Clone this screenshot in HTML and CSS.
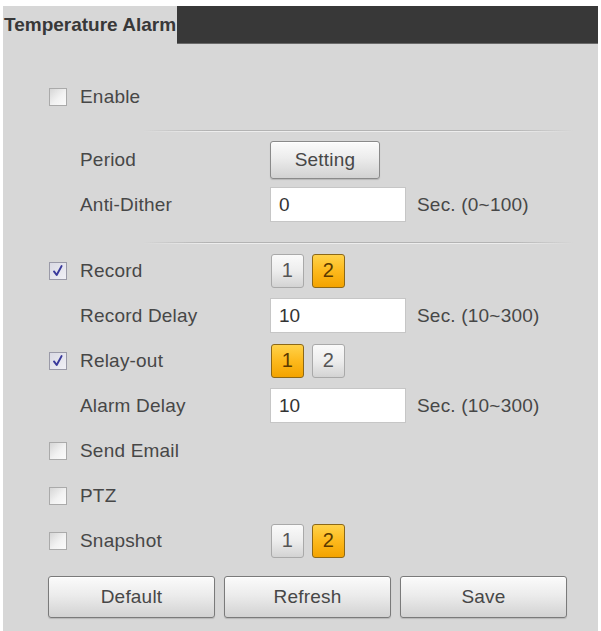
FILE: index.html
```html
<!DOCTYPE html>
<html>
<head>
<meta charset="utf-8">
<title>Temperature Alarm</title>
<link rel="stylesheet" href="styles.css">
</head>
<body>
<div class="panel">
  <div class="titlebar">
    <div class="title">Temperature Alarm</div>
    <div class="bar"></div>
  </div>
  <div class="form">
    <div class="row">
      <span class="cb"></span><span class="label">Enable</span>
    </div>
    <div class="sep sep1"></div>
    <div class="row">
      <span class="cell"></span><span class="label">Period</span>
      <button class="btn setting">Setting</button>
    </div>
    <div class="row">
      <span class="cell"></span><span class="label">Anti-Dither</span>
      <input class="field" type="text" value="0"><span class="unit">Sec. (0~100)</span>
    </div>
    <div class="sep sep2"></div>
    <div class="row">
      <span class="cb checked"><svg viewBox="0 0 18 18" width="16" height="16"><path d="M4.5 9.5 L7.5 13.5 L13 3.5" fill="none" stroke="#3a3a9c" stroke-width="2.2" stroke-linecap="round" stroke-linejoin="round"/></svg></span><span class="label">Record</span>
      <div class="nums"><span class="num">1</span><span class="num on">2</span></div>
    </div>
    <div class="row">
      <span class="cell"></span><span class="label">Record Delay</span>
      <input class="field" type="text" value="10"><span class="unit">Sec. (10~300)</span>
    </div>
    <div class="row">
      <span class="cb checked"><svg viewBox="0 0 18 18" width="16" height="16"><path d="M4.5 9.5 L7.5 13.5 L13 3.5" fill="none" stroke="#3a3a9c" stroke-width="2.2" stroke-linecap="round" stroke-linejoin="round"/></svg></span><span class="label">Relay-out</span>
      <div class="nums"><span class="num on">1</span><span class="num">2</span></div>
    </div>
    <div class="row">
      <span class="cell"></span><span class="label">Alarm Delay</span>
      <input class="field" type="text" value="10"><span class="unit">Sec. (10~300)</span>
    </div>
    <div class="row">
      <span class="cb"></span><span class="label">Send Email</span>
    </div>
    <div class="row">
      <span class="cb"></span><span class="label">PTZ</span>
    </div>
    <div class="row">
      <span class="cb"></span><span class="label">Snapshot</span>
      <div class="nums"><span class="num">1</span><span class="num on">2</span></div>
    </div>
    <div class="actions">
      <button class="btn action">Default</button>
      <button class="btn action">Refresh</button>
      <button class="btn action">Save</button>
    </div>
  </div>
</div>
</body>
</html>
```
FILE: styles.css
```css
* { box-sizing: border-box; }
html, body { margin: 0; padding: 0; background: #ffffff; }
body {
  width: 601px;
  height: 631px;
  overflow: hidden;
  font-family: "Liberation Sans", Arial, sans-serif;
  font-size: 19px;
  letter-spacing: 0.2px;
  color: #474747;
}
.panel {
  margin: 6px 3px 0 3px;
  height: 625px;
  background: #d7d7d7;
}
.titlebar {
  display: flex;
  height: 38px;
}
.title {
  width: 174px;
  display: flex;
  align-items: center;
  padding-left: 1px;
  font-size: 19px;
  letter-spacing: 0;
  font-weight: bold;
  color: #383838;
  white-space: nowrap;
  overflow: hidden;
}
.bar {
  flex: 1;
  background: #383838;
  border-bottom: 1px solid #6a6a6a;
}
.form {
  padding: 30px 0 0 46px;
}
.row {
  display: flex;
  align-items: center;
  height: 45px;
}
.cb {
  width: 18px;
  height: 18px;
  margin-right: 13px;
  border: 1px solid #aaaaaa;
  background: linear-gradient(135deg, #d6d6d6 0%, #f2f2f2 55%, #fbfbfb 100%);
  display: flex;
  align-items: center;
  justify-content: center;
}
.cb.checked {
  background: linear-gradient(135deg, #dadae4 0%, #f0f0f6 100%);
  border-color: #9a9aa8;
}
.cell { width: 31px; }
.label {
  width: 190px;
  white-space: nowrap;
}
.sep {
  height: 2px;
  margin-left: 94px;
  width: 430px;
  background:
    linear-gradient(to right, rgba(180,180,180,0) 0%, #b3b3b3 15%, #b3b3b3 85%, rgba(180,180,180,0) 100%) top / 100% 1px no-repeat,
    linear-gradient(to right, rgba(240,240,240,0) 0%, #ededed 15%, #ededed 85%, rgba(240,240,240,0) 100%) bottom / 100% 1px no-repeat;
}
.sep1 { margin-top: 11px; margin-bottom: 5px; }
.sep2 { margin-top: 15px; margin-bottom: 4px; }
.btn {
  font-family: "Liberation Sans", Arial, sans-serif;
  font-size: 19px;
  letter-spacing: 0.2px;
  color: #474747;
  border: 1px solid #8a8a8a;
  border-radius: 3px;
  background: linear-gradient(to bottom, #fbfbfb 0%, #ececec 45%, #d2d2d2 100%);
  box-shadow: inset 0 1px 0 #ffffff, 0 1px 1px rgba(0,0,0,0.15);
  padding: 0;
  cursor: pointer;
}
.setting {
  width: 110px;
  height: 38px;
}
.field {
  width: 136px;
  height: 35px;
  border: 1px solid #c6c6c6;
  background: #ffffff;
  padding: 0 0 0 8px;
  margin: 0 11px 0 0;
  font-family: "Liberation Sans", Arial, sans-serif;
  font-size: 19px;
  color: #333333;
  outline: none;
}
.unit { white-space: nowrap; }
.nums {
  display: flex;
  gap: 8px;
  margin-left: 1px;
}
.num {
  width: 33px;
  height: 34px;
  display: flex;
  align-items: center;
  justify-content: center;
  border: 1px solid #a9a9a9;
  border-radius: 3px;
  background: linear-gradient(to bottom, #fafafa 0%, #ededed 50%, #d3d3d3 100%);
  color: #555555;
  font-size: 20px;
}
.num.on {
  border-color: #8c6818;
  background: linear-gradient(to bottom, #ffd24a 0%, #fdb91c 50%, #f3a300 100%);
  color: #5a3a00;
}
.actions {
  display: flex;
  gap: 9px;
  margin: 13px 0 0 -1px;
}
.action {
  width: 167px;
  height: 42px;
  border-color: #7a7a7a;
}
```
